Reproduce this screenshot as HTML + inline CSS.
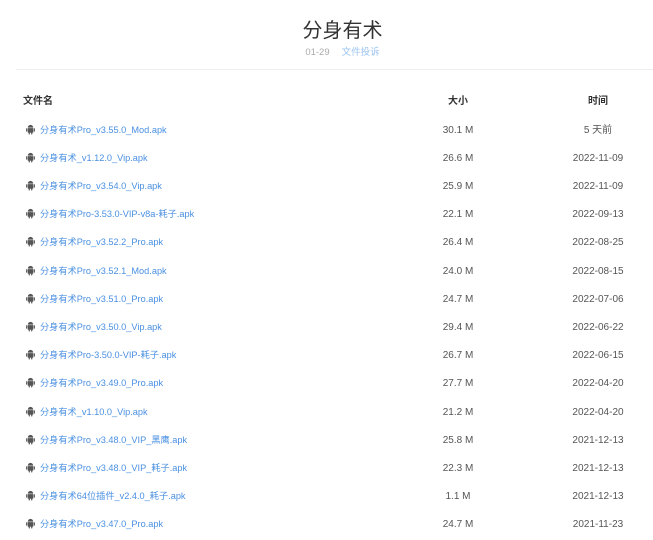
<!DOCTYPE html>
<html><head><meta charset="utf-8"><style>
body{margin:0;background:#fff;font-family:"Liberation Sans","Noto Sans CJK SC",sans-serif;width:653px;height:540px;overflow:hidden;position:relative}
.t{position:absolute;top:14px;left:16px;width:653px;text-align:center;font-size:20px;color:#333}
.s{position:absolute;top:44px;left:16px;width:653px;text-align:center;font-size:9.5px;color:#aaa}
.s span{color:#9cc4f0;margin-left:12px}
.hr{position:absolute;top:69px;left:16px;right:0;border-top:1px solid #eee}
.r{position:absolute;left:0;width:653px;height:14px;font-size:10px;line-height:14px}
.n{position:absolute;left:25px;top:-1px;color:#4a90e2;font-size:9.2px}
.n svg{vertical-align:-2px;margin-right:4px}
.z{position:absolute;left:418px;width:80px;text-align:center;color:#555}
.d{position:absolute;left:558px;width:80px;text-align:center;color:#555}
.h{font-weight:bold;color:#333}
.h .n{left:23px;top:0;color:#333;font-size:10px}
.h .z,.h .d{color:#333}
</style></head><body>
<div class="t">分身有术</div>
<div class="s">01-29<span>文件投诉</span></div>
<div class="hr"></div>
<div class="r h" style="top:95px"><div class="n">文件名</div><div class="z">大小</div><div class="d">时间</div></div>
<div id="rows"></div>
<script>
var d=[["分身有术Pro_v3.55.0_Mod.apk","30.1 M","5 天前"],["分身有术_v1.12.0_Vip.apk","26.6 M","2022-11-09"],["分身有术Pro_v3.54.0_Vip.apk","25.9 M","2022-11-09"],["分身有术Pro-3.53.0-VIP-v8a-耗子.apk","22.1 M","2022-09-13"],["分身有术Pro_v3.52.2_Pro.apk","26.4 M","2022-08-25"],["分身有术Pro_v3.52.1_Mod.apk","24.0 M","2022-08-15"],["分身有术Pro_v3.51.0_Pro.apk","24.7 M","2022-07-06"],["分身有术Pro_v3.50.0_Vip.apk","29.4 M","2022-06-22"],["分身有术Pro-3.50.0-VIP-耗子.apk","26.7 M","2022-06-15"],["分身有术Pro_v3.49.0_Pro.apk","27.7 M","2022-04-20"],["分身有术_v1.10.0_Vip.apk","21.2 M","2022-04-20"],["分身有术Pro_v3.48.0_VIP_黑鹰.apk","25.8 M","2021-12-13"],["分身有术Pro_v3.48.0_VIP_耗子.apk","22.3 M","2021-12-13"],["分身有术64位插件_v2.4.0_耗子.apk","1.1 M","2021-12-13"],["分身有术Pro_v3.47.0_Pro.apk","24.7 M","2021-11-23"]];
var ic='<svg width="11" height="11" viewBox="0 0 12 12"><rect x="3" y="4.5" width="6" height="5" fill="#555"/><path d="M3 4A3 3 0 0 1 9 4Z" fill="#555"/><rect x="1.2" y="4.6" width="1.3" height="3.8" rx=".6" fill="#555"/><rect x="9.5" y="4.6" width="1.3" height="3.8" rx=".6" fill="#555"/><rect x="4" y="9" width="1.3" height="2.5" rx=".6" fill="#555"/><rect x="6.7" y="9" width="1.3" height="2.5" rx=".6" fill="#555"/></svg>';
var h='';d.forEach(function(r,i){h+='<div class="r" style="top:'+(123.5+i*28.2)+'px"><div class="n">'+ic+r[0]+'</div><div class="z">'+r[1]+'</div><div class="d">'+r[2]+'</div></div>'});
document.getElementById('rows').innerHTML=h;
</script>
</body></html>
